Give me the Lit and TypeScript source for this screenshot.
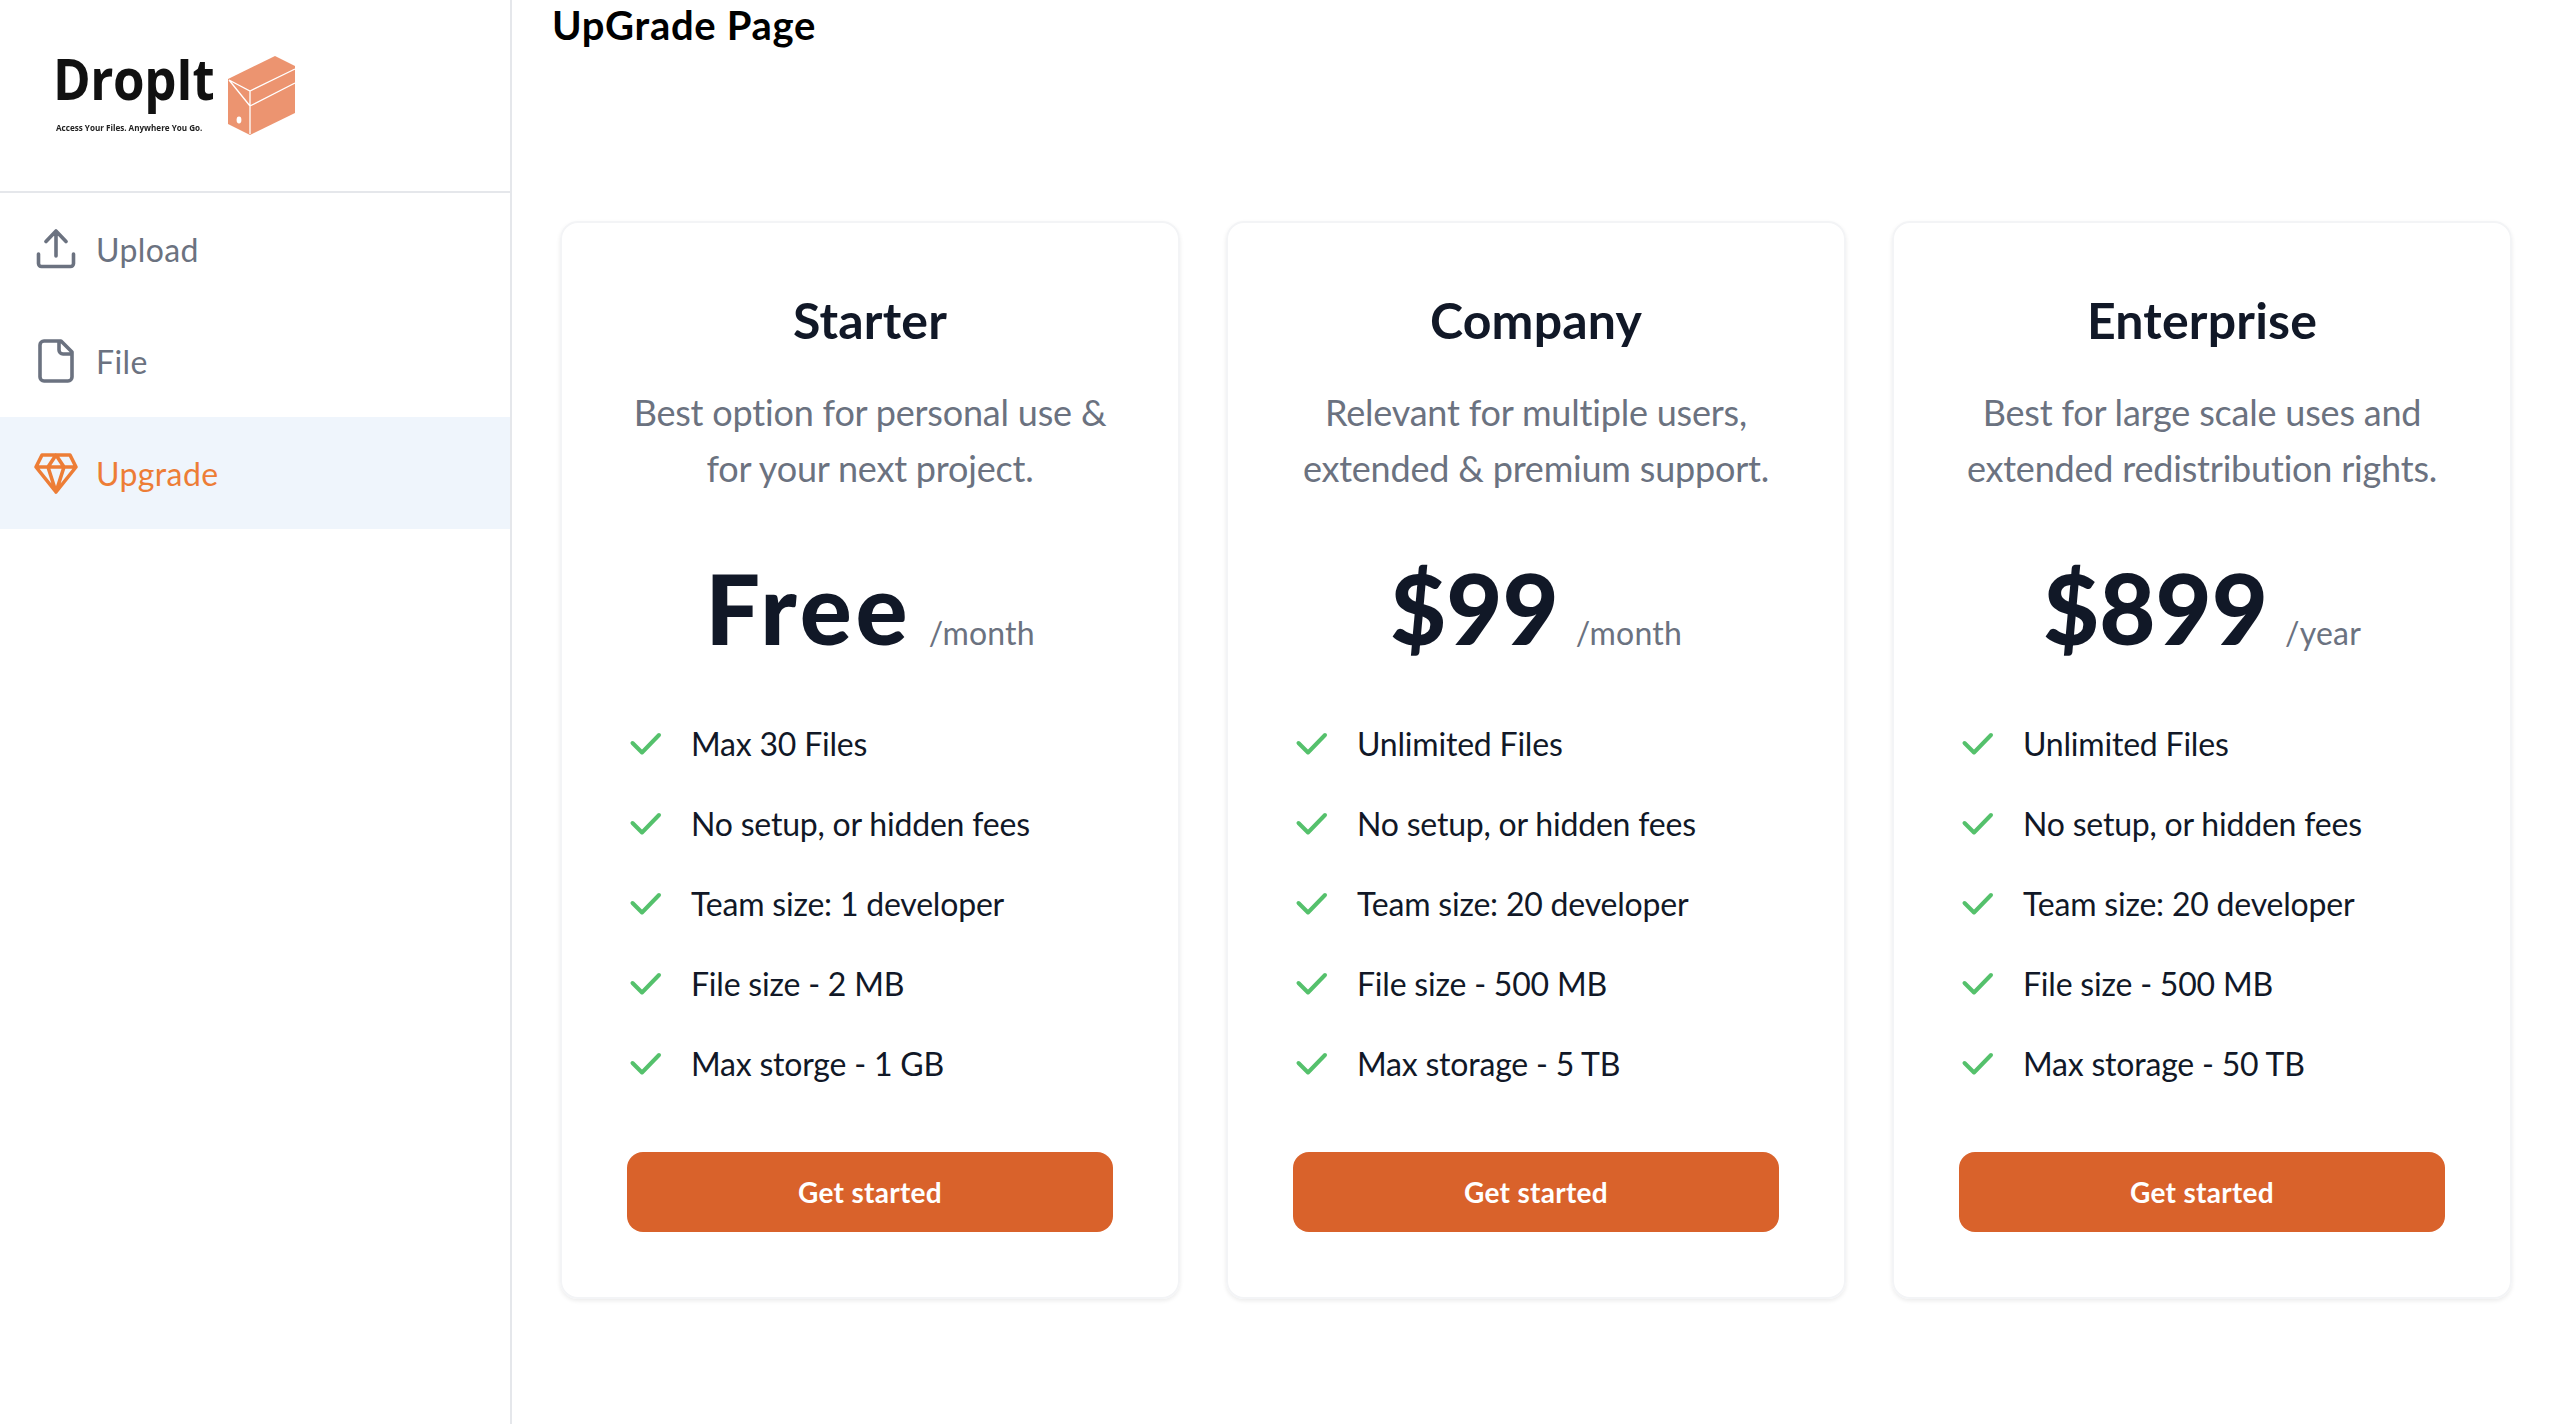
import { LitElement, html, css, svg } from 'lit';
import { customElement } from 'lit/decorators.js';

interface Plan {
	name: string;
	desc: string[];
	price: string;
	priceTracking: number;
	period: string;
	features: string[];
}

const plans: Plan[] = [
	{
		name: 'Starter',
		desc: ['Best option for personal use &', 'for your next project.'],
		price: 'Free',
		priceTracking: 4,
		period: '/month',
		features: ['Max 30 Files', 'No setup, or hidden fees', 'Team size: 1 developer', 'File size - 2 MB', 'Max storge - 1 GB'],
	},
	{
		name: 'Company',
		desc: ['Relevant for multiple users,', 'extended & premium support.'],
		price: '$99',
		priceTracking: 0,
		period: '/month',
		features: ['Unlimited Files', 'No setup, or hidden fees', 'Team size: 20 developer', 'File size - 500 MB', 'Max storage - 5 TB'],
	},
	{
		name: 'Enterprise',
		desc: ['Best for large scale uses and', 'extended redistribution rights.'],
		price: '$899',
		priceTracking: 0,
		period: '/year',
		features: ['Unlimited Files', 'No setup, or hidden fees', 'Team size: 20 developer', 'File size - 500 MB', 'Max storage - 50 TB'],
	},
];

const uploadIcon = svg`<path d="M6.5 29v9.5a3 3 0 0 0 3 3h29a3 3 0 0 0 3-3V29M24 31V6M14 16.5 24 6l10 10.5" />`;
const fileIcon = svg`<path d="M12 4h17l11 11v25a4 4 0 0 1-4 4H12a4 4 0 0 1-4-4V8a4 4 0 0 1 4-4zM27 4v9a4 4 0 0 0 4 4h9" />`;
const gemIcon = svg`<path d="M10 6h28l6 12-20 25L4 18zM4 18h40M16 18l8 25 8-25M16 18l8-12 8 12" />`;

@customElement('app-root')
export class AppRoot extends LitElement {
	static styles = css`
		:host {
			display: flex;
			min-height: 1424px;
			background: #fff;
			font-family: Lato, 'Noto Sans', sans-serif;
			color: #111827;
		}
		.sidebar {
			width: 510px;
			flex: none;
			border-right: 2px solid #e5e7eb;
		}
		.brand {
			height: 193px;
			box-sizing: border-box;
			border-bottom: 2px solid #e5e7eb;
			padding: 54px 0 0 54px;
			display: flex;
		}
		.brand-text {
			width: 172px;
			filter: blur(0.4px);
		}
		.brand-name {
			display: inline-block;
			margin: 1px 0 0 -1px;
			font-family: 'Open Sans', sans-serif;
			font-weight: 700;
			font-size: 58px;
			line-height: 46px;
			letter-spacing: -0.5px;
			color: #111;
			transform: scaleX(0.88);
			transform-origin: left;
		}
		.brand-tag {
			margin: 19px 0 0 2px;
			font-family: 'Open Sans', sans-serif;
			font-weight: 700;
			font-size: 8.1px;
			line-height: 12px;
			color: #222;
			white-space: nowrap;
		}
		.box {
			display: block;
			filter: blur(0.3px);
		}
		.nav-item {
			height: 112px;
			display: flex;
			align-items: center;
			gap: 16px;
			padding-left: 32px;
			font-size: 32px;
			letter-spacing: 0.4px;
			color: #6b7280;
		}
		.nav-item.active {
			background: #eff5fc;
			color: #ed7d36;
		}
		.nav-item svg {
			width: 48px;
			height: 48px;
			flex: none;
			fill: none;
			stroke: currentColor;
			stroke-width: 3.6;
			stroke-linecap: round;
			stroke-linejoin: round;
		}
		main {
			flex: 1;
			min-width: 0;
		}
		h1 {
			margin: 0;
			padding-left: 40px;
			font-size: 40px;
			line-height: 50px;
			font-weight: 700;
			letter-spacing: 0.7px;
			color: #000;
		}
		.plans {
			display: grid;
			grid-template-columns: repeat(3, 1fr);
			gap: 46px;
			padding: 171px 48px 0;
		}
		.card {
			border: 2px solid #f3f4f6;
			border-radius: 18px;
			box-shadow: 0 2px 4px rgba(0, 0, 0, 0.08);
			padding: 65px;
			text-align: center;
		}
		h3 {
			margin: 0;
			font-size: 50px;
			line-height: 64px;
			font-weight: 700;
			letter-spacing: 0.2px;
		}
		.desc {
			margin: 32px 0 0;
			font-size: 36px;
			line-height: 56px;
			letter-spacing: -0.2px;
			color: #6b7280;
			white-space: nowrap;
		}
		.price {
			display: flex;
			justify-content: center;
			align-items: baseline;
			gap: 17px;
			margin: 64px 0;
		}
		.amount {
			font-size: 97px;
			line-height: 96px;
			font-weight: 900;
		}
		.period {
			font-size: 32px;
			letter-spacing: 0.2px;
			color: #6b7280;
		}
		ul {
			list-style: none;
			margin: 0 0 64px;
			padding: 0;
			display: flex;
			flex-direction: column;
			gap: 32px;
			text-align: left;
		}
		li {
			display: flex;
			align-items: center;
			gap: 24px;
			font-size: 32px;
			line-height: 48px;
			letter-spacing: -0.2px;
		}
		li svg {
			width: 40px;
			height: 40px;
			flex: none;
			fill: none;
			stroke: #55c16c;
			stroke-width: 4;
			stroke-linecap: round;
			stroke-linejoin: round;
		}
		.cta {
			height: 80px;
			border-radius: 16px;
			background: #d9622b;
			color: #fff;
			font-size: 28px;
			font-weight: 700;
			letter-spacing: 0.3px;
			display: flex;
			align-items: center;
			justify-content: center;
		}
	`;

	renderCard(plan: Plan) {
		return html`
			<section class="card">
				<h3>${plan.name}</h3>
				<p class="desc">${plan.desc[0]}<br />${plan.desc[1]}</p>
				<div class="price">
					<span class="amount" style="letter-spacing: ${plan.priceTracking}px">${plan.price}</span>
					<span class="period">${plan.period}</span>
				</div>
				<ul>
					${plan.features.map(
						(f) => html`<li>
							<svg viewBox="0 0 40 40"><path d="M5.5 19 15 28.5 32 11" /></svg>
							<span>${f}</span>
						</li>`
					)}
				</ul>
				<div class="cta">Get started</div>
			</section>
		`;
	}

	render() {
		return html`
			<aside class="sidebar">
				<div class="brand">
					<div class="brand-text">
						<div class="brand-name">DropIt</div>
						<div class="brand-tag">Access Your Files. Anywhere You Go.</div>
					</div>
					<svg class="box" width="70" height="82" viewBox="226 54 70 82">
						<path d="M275 56 295 66V113L250 135 228 124V79Z" fill="#ec9470" />
						<path d="M229 80 250 91 295 69M250 91V134M250 106 295 83M229 80 250 106" fill="none" stroke="#fff" stroke-width="1.3" />
						<ellipse cx="239" cy="120" rx="2.4" ry="3.4" fill="#fff" />
					</svg>
				</div>
				<nav>
					<div class="nav-item">
						<svg viewBox="0 0 48 48">${uploadIcon}</svg>
						<span>Upload</span>
					</div>
					<div class="nav-item">
						<svg viewBox="0 0 48 48">${fileIcon}</svg>
						<span>File</span>
					</div>
					<div class="nav-item active">
						<svg viewBox="0 0 48 48">${gemIcon}</svg>
						<span>Upgrade</span>
					</div>
				</nav>
			</aside>
			<main>
				<h1>UpGrade Page</h1>
				<div class="plans">${plans.map((p) => this.renderCard(p))}</div>
			</main>
		`;
	}
}
